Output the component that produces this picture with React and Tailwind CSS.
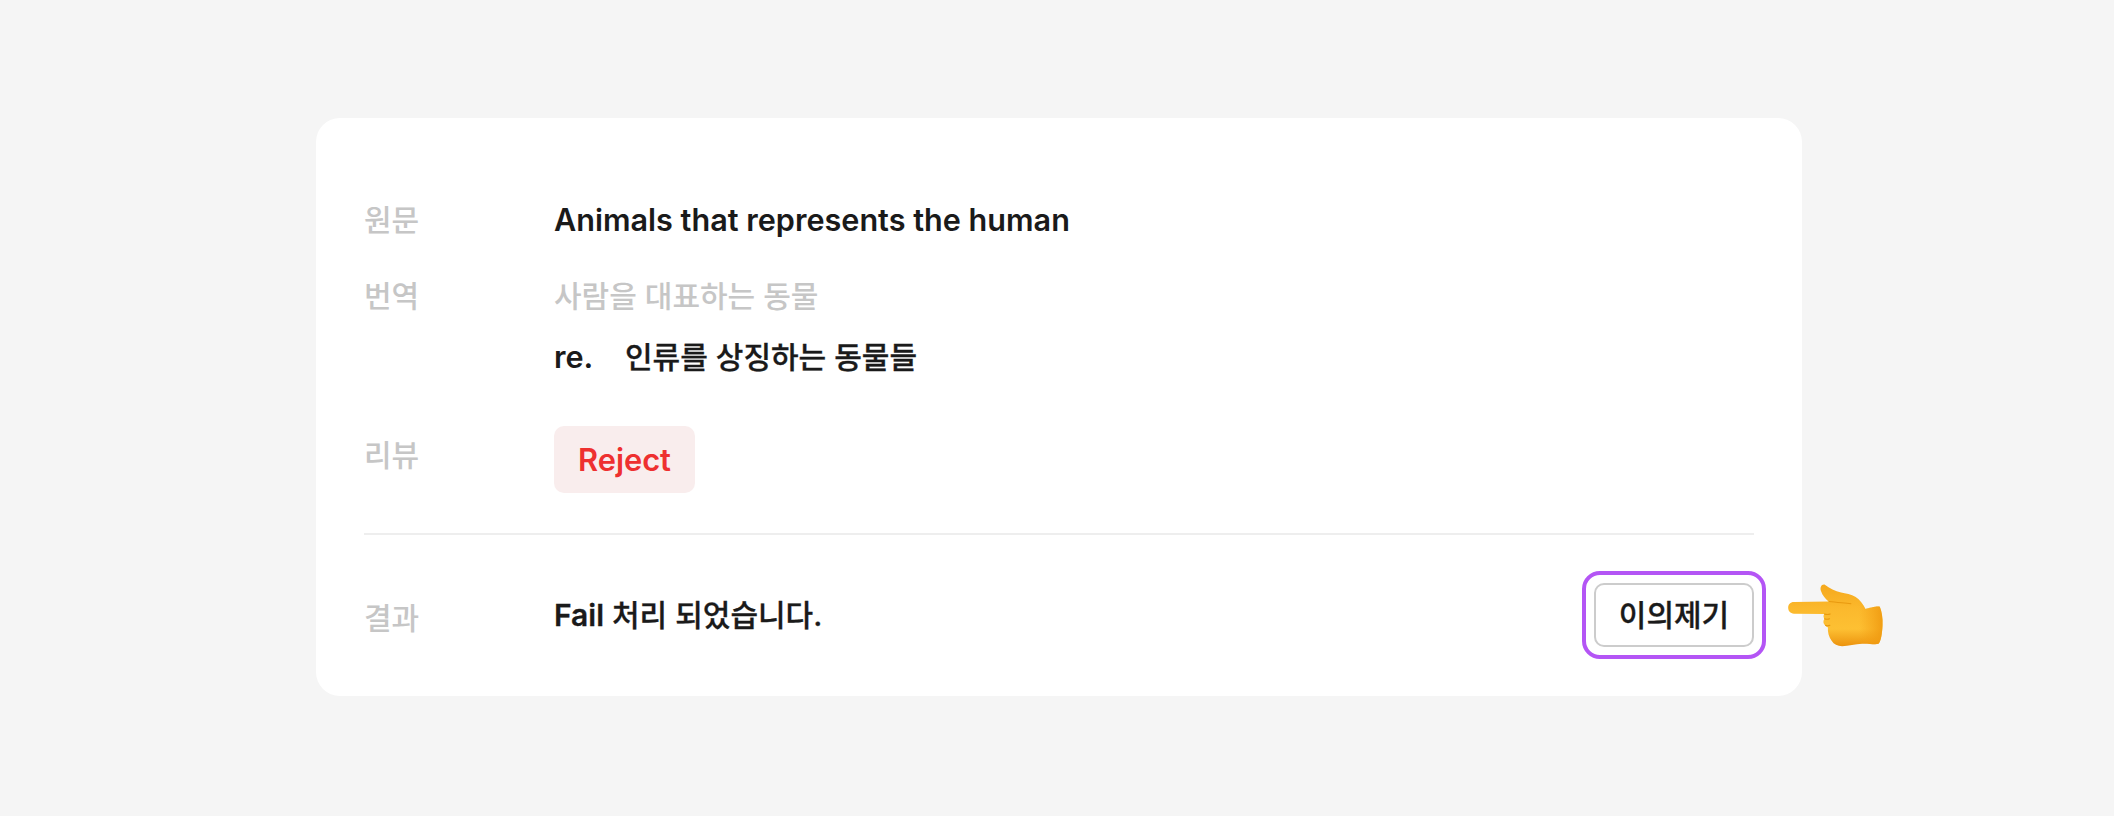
const font = "font-['Inter','Noto_Sans_CJK_KR',sans-serif]";

const handPath =
  "M134 30C124 29 120 40 124 50C128 62 136 72 146 80L44 82C33 82 27 90 27 99C27 108 33 116 44 116L133 117C130 122 131 128 134 131C129 137 130 146 136 150C138 153 140 155 144 156C143 170 147 185 155 196C162 207 172 212 186 212C205 212 225 206 245 205C262 204 285 208 293 205C300 198 304 175 305 150C306 130 303 110 297 96C290 93 265 100 255 102C248 88 238 75 226 67C213 59 196 57 183 54C165 50 150 42 134 30Z";

function Hand() {
  return (
    <svg width="112" height="82" viewBox="0 0 330 240" className="absolute left-[1463px] top-[456px]" aria-hidden="true">
      <defs>
        <linearGradient id="skin" x1="0" y1="0" x2="0" y2="1">
          <stop offset="0" stopColor="#f5a81c" />
          <stop offset="0.4" stopColor="#fbb92d" />
          <stop offset="0.72" stopColor="#fdc033" />
          <stop offset="1" stopColor="#ec930e" />
        </linearGradient>
        <linearGradient id="cuff" x1="0" y1="0" x2="1" y2="0">
          <stop offset="0.75" stopColor="#f59f14" stopOpacity="0" />
          <stop offset="1" stopColor="#ef9a10" stopOpacity="0.9" />
        </linearGradient>
      </defs>
      <path d={handPath} fill="url(#skin)" />
      <path d={handPath} fill="url(#cuff)" />
      <path d="M148 80C170 82 192 85 212 87" fill="none" stroke="#e8990f" strokeWidth="3" strokeLinecap="round" />
      <path d="M134 117C140 119 145 119 151 117M134 131C139 133 144 133 149 131M137 150C141 152 146 152 150 150" fill="none" stroke="#e8990f" strokeWidth="3" strokeLinecap="round" />
    </svg>
  );
}

function Row({ label, className = "", labelClassName = "", children }) {
  return (
    <div className={`flex ${className}`}>
      <div className={`w-[190px] shrink-0 font-medium text-[#c6c6c6] ${labelClassName}`}>{label}</div>
      <div className="flex-1">{children}</div>
    </div>
  );
}

export default function App() {
  return (
    <div className={`min-h-screen bg-[#f5f5f5] pt-[118px] ${font} text-[30px] leading-[40px] font-medium text-[#1a1a1a]`}>
      <div className="relative ml-[316px] h-[578px] w-[1486px] rounded-[24px] bg-white px-12 pt-[82px]">
        <Row label="원문">
          <span className="text-[30.6px] font-semibold">Animals that represents the human</span>
        </Row>
        <Row label="번역" className="mt-[36px]">
          <div className="text-[#c6c6c6]">사람을 대표하는 동물</div>
          <div className="mt-[21px] flex">
            <span className="w-[71px] text-[30.6px] font-semibold">re.</span>
            <span className="[-webkit-text-stroke:0.3px_#1a1a1a]">인류를 상징하는 동물들</span>
          </div>
        </Row>
        <Row label="리뷰" className="mt-[49px] items-center" labelClassName="mb-[10px]">
          <span className="inline-block rounded-[10px] bg-[#f9eded] px-6 py-[13.5px] text-[30.8px] font-semibold text-[#ee3030]">Reject</span>
        </Row>
        <div className="mt-[40px] h-[2px] bg-[#eeeeee]" />
        <Row label="결과" className="mt-[48px] items-center" labelClassName="mt-[6px]">
          <div className="flex items-center justify-between">
            <span className="[-webkit-text-stroke:0.3px_#1a1a1a]"><span className="font-semibold">Fail</span> 처리 되었습니다.</span>
            <div className="relative">
              <button className="h-16 w-40 rounded-[10px] border-2 border-[#cccccc] bg-white font-medium [-webkit-text-stroke:0.3px_#1a1a1a]">이의제기</button>
              <div className="absolute -inset-3 rounded-[18px] border-[4px] border-[#b455f5]" />
            </div>
          </div>
        </Row>
        <Hand />
      </div>
    </div>
  );
}
